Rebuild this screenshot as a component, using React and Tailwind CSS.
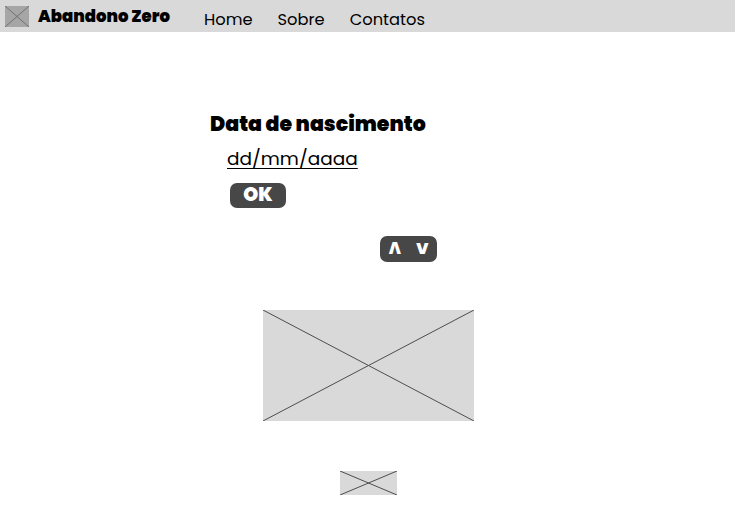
import React from "react";

const Placeholder = ({ className, stroke = "#4d4d4d" }) => (
  <div className={`relative bg-[#d9d9d9] ${className}`}>
    <svg
      className="absolute inset-0 h-full w-full"
      viewBox="0 0 100 100"
      preserveAspectRatio="none"
    >
      <line x1="0" y1="0" x2="100" y2="100" stroke={stroke} strokeWidth="1" vectorEffect="non-scaling-stroke" />
      <line x1="100" y1="0" x2="0" y2="100" stroke={stroke} strokeWidth="1" vectorEffect="non-scaling-stroke" />
    </svg>
  </div>
);

export default function App() {
  return (
    <div className="min-h-screen bg-white font-['Poppins','Inter',sans-serif] text-black">
      {/* Header */}
      <header className="flex h-8 items-center bg-[#d9d9d9]">
        <Placeholder className="ml-[5px] h-[21px] w-6 !bg-[#a6a6a6]" stroke="#707070" />
        <div className="ml-[9px] mt-[2px] text-[16.5px] font-black">Abandono Zero</div>
        <nav className="ml-[34px] mt-[8px] flex gap-[25px] text-[16.3px]">
          <a>Home</a>
          <a>Sobre</a>
          <a>Contatos</a>
        </nav>
      </header>

      {/* Form */}
      <main className="flex flex-col">
        <div className="ml-[210px] mt-[78px] flex flex-col">
          <h1 className="text-[20.5px] font-black leading-[28px]">Data de nascimento</h1>
          <div className="ml-[17px] mt-[9px] text-[18.5px] leading-6 underline underline-offset-[3px] decoration-1">
            dd/mm/aaaa
          </div>
          <button className="ml-5 mt-[12px] flex h-[25px] w-14 items-center justify-center rounded-[7px] bg-[#474747] text-[19px] font-black text-white">
            OK
          </button>
          <button className="ml-[170px] mt-[28px] flex h-[26px] w-[57px] items-center justify-center gap-[15px] rounded-[7px] bg-[#474747] text-[16px] font-black text-white">
            <span>Λ</span>
            <span>V</span>
          </button>
        </div>

        <div className="mt-[48px] flex flex-col items-center">
          <Placeholder className="ml-[2px] h-[111px] w-[211px]" />
          <Placeholder className="ml-[2px] mt-[50px] h-6 w-[57px]" />
        </div>
      </main>
    </div>
  );
}
